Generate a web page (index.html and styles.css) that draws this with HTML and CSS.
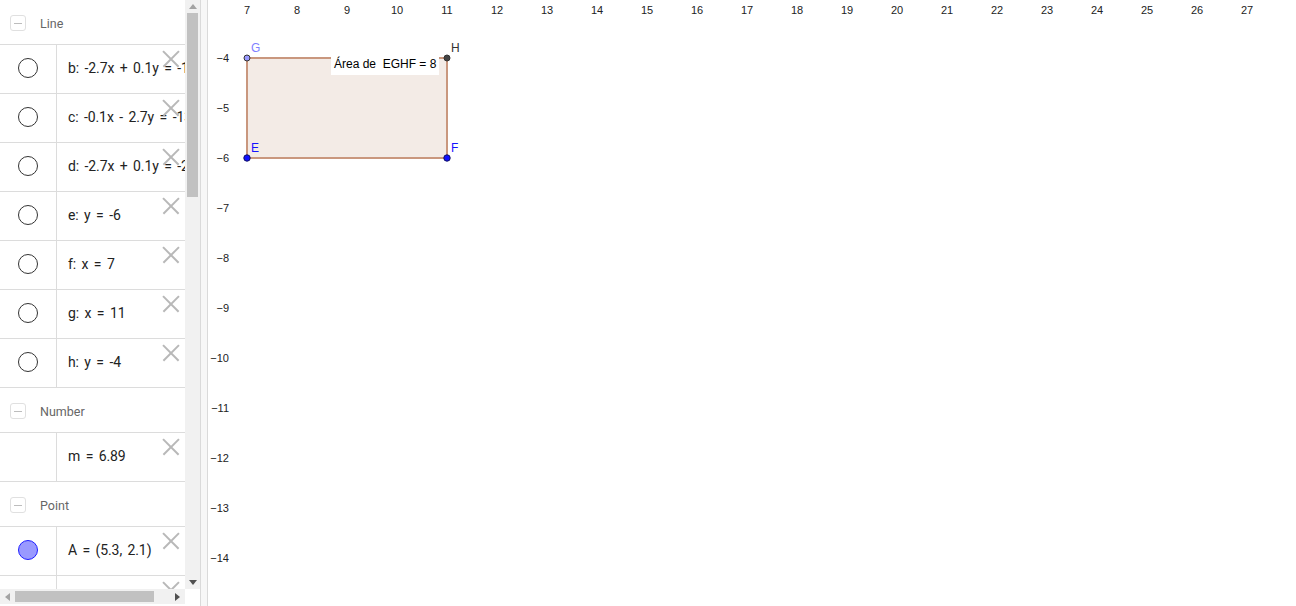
FILE: index.html
```html
<!DOCTYPE html>
<html>
<head>
<meta charset="utf-8">
<link rel="stylesheet" href="styles.css">
</head>
<body>
<div class="app">
  <div class="algebra">
    <div class="list">
      <div class="header"><span class="toggle"></span><span class="htext">Line</span></div>
      <div class="row"><div class="mark"><span class="circle"></span></div><div class="expr">b: -2.7x + 0.1y = -1</div><span class="del"></span></div>
      <div class="row"><div class="mark"><span class="circle"></span></div><div class="expr">c: -0.1x - 2.7y = -13</div><span class="del"></span></div>
      <div class="row"><div class="mark"><span class="circle"></span></div><div class="expr">d: -2.7x + 0.1y = -2</div><span class="del"></span></div>
      <div class="row"><div class="mark"><span class="circle"></span></div><div class="expr">e: y = -6</div><span class="del"></span></div>
      <div class="row"><div class="mark"><span class="circle"></span></div><div class="expr">f: x = 7</div><span class="del"></span></div>
      <div class="row"><div class="mark"><span class="circle"></span></div><div class="expr">g: x = 11</div><span class="del"></span></div>
      <div class="row"><div class="mark"><span class="circle"></span></div><div class="expr">h: y = -4</div><span class="del"></span></div>
      <div class="header"><span class="toggle"></span><span class="htext">Number</span></div>
      <div class="row"><div class="mark"></div><div class="expr">m = 6.89</div><span class="del"></span></div>
      <div class="header"><span class="toggle"></span><span class="htext">Point</span></div>
      <div class="row"><div class="mark"><span class="circle filled"></span></div><div class="expr">A = (5.3, 2.1)</div><span class="del"></span></div>
      <div class="row"><div class="mark"><span class="circle filled"></span></div><div class="expr"></div><span class="del"></span></div>
    </div>
    <div class="vscroll">
      <span class="arrow up"></span>
      <div class="vtrack"><div class="vthumb"></div></div>
      <span class="arrow down"></span>
    </div>
    <div class="hscroll">
      <span class="arrow left"></span>
      <div class="htrack"><div class="hthumb"></div></div>
      <span class="arrow right"></span>
    </div>
    <div class="corner"></div>
  </div>
  <div class="splitter"></div>
  <div class="graphics">
    <svg class="canvas" width="1088" height="606" viewBox="0 0 1088 606">
      <g class="xlabels" text-anchor="middle">
        <text x="39" y="14">7</text><text x="89" y="14">8</text><text x="139" y="14">9</text><text x="189" y="14">10</text>
        <text x="239" y="14">11</text><text x="289" y="14">12</text><text x="339" y="14">13</text><text x="389" y="14">14</text>
        <text x="439" y="14">15</text><text x="489" y="14">16</text><text x="539" y="14">17</text><text x="589" y="14">18</text>
        <text x="639" y="14">19</text><text x="689" y="14">20</text><text x="739" y="14">21</text><text x="789" y="14">22</text>
        <text x="839" y="14">23</text><text x="889" y="14">24</text><text x="939" y="14">25</text><text x="989" y="14">26</text>
        <text x="1039" y="14">27</text>
      </g>
      <g class="ylabels" text-anchor="end">
        <text x="21" y="62">−4</text><text x="21" y="112">−5</text><text x="21" y="162">−6</text>
        <text x="21" y="212">−7</text><text x="21" y="262">−8</text><text x="21" y="312">−9</text>
        <text x="21" y="362">−10</text><text x="21" y="412">−11</text><text x="21" y="462">−12</text>
        <text x="21" y="512">−13</text><text x="21" y="562">−14</text>
      </g>
      <rect class="poly" x="39" y="58" width="200" height="100"></rect>
      <rect class="labelbox" x="123" y="56" width="108" height="19"></rect>
      <text class="area" x="126" y="68">Área de&#160; EGHF = 8</text>
      <circle class="pt ptG" cx="39" cy="58" r="3"></circle>
      <circle class="pt ptH" cx="239" cy="58" r="3"></circle>
      <circle class="pt ptE" cx="39" cy="158" r="3.2"></circle>
      <circle class="pt ptE" cx="239" cy="158" r="3.2"></circle>
      <text class="plabel lG" x="43" y="52">G</text>
      <text class="plabel lH" x="243" y="52">H</text>
      <text class="plabel lE" x="43" y="152">E</text>
      <text class="plabel lE" x="243" y="152">F</text>
    </svg>
  </div>
</div>
</body>
</html>
```
FILE: styles.css
```css
* { box-sizing: border-box; }
html, body { margin: 0; padding: 0; background: #fff; }
body { width: 1296px; height: 606px; overflow: hidden; font-family: Roboto, "Liberation Sans", sans-serif; }
.app { display: flex; width: 1296px; height: 606px; }

.algebra {
  width: 200px; height: 606px;
  display: grid;
  grid-template-columns: 185px 15px;
  grid-template-rows: 589px 17px;
}
.list { overflow: hidden; background: #fff; }
.header {
  height: 45px; border-bottom: 1px solid #dcdcdc;
  display: flex; align-items: center; padding-left: 10px;
}
.toggle {
  width: 16px; height: 16px; border: 1px solid #e0e0e0; border-radius: 3px;
  position: relative; margin-right: 14px; margin-top: 2px;
}
.toggle::after {
  content: ""; position: absolute; left: 3px; right: 3px; top: 7px; height: 1px; background: #bdbdbd;
}
.htext { font-size: 12.5px; color: #666; margin-top: 2px; }
.row {
  height: 49px; border-bottom: 1px solid #dcdcdc;
  display: flex; position: relative;
}
.mark {
  flex: none;
  width: 57px; border-right: 1px solid #dcdcdc;
  display: flex; align-items: center; justify-content: center;
}
.circle {
  width: 20px; height: 20px; border-radius: 50%; border: 1px solid #333; display: block; margin-top: -2px;
}
.circle.filled { background: #9999ff; border: 1px solid #1f1fff; }
.expr {
  flex: 1; min-width: 0; overflow: hidden;
  padding-left: 11px; padding-bottom: 3px; font-size: 14px; color: #222; white-space: nowrap;
  display: flex; align-items: center; letter-spacing: -0.1px; word-spacing: 2.1px;
}
.del {
  position: absolute; left: 163px; top: 6px; width: 16px; height: 16px;
}
.del::before, .del::after {
  content: ""; position: absolute; left: -3px; top: 7px; width: 22px; height: 1.5px; background: #b8b8b8;
}
.del::before { transform: rotate(45deg); }
.del::after { transform: rotate(-45deg); }

.vscroll { background: #f1f1f1; display: flex; flex-direction: column; align-items: center; }
.vtrack { flex: 1; width: 100%; padding: 0 2px; }
.vthumb { margin-top: 0; height: 184px; background: #c1c1c1; }
.hscroll { background: #f1f1f1; display: flex; align-items: center; height: 15px; }
.htrack { flex: 1; height: 100%; padding: 2px 0; }
.hthumb { margin-left: 0; width: 139px; height: 100%; background: #c1c1c1; }
.corner { background: #fff; }
.arrow { display: block; width: 0; height: 0; flex: none; }
.arrow.up { margin: 4px 0 4px; border-left: 4px solid transparent; border-right: 4px solid transparent; border-bottom: 5px solid #a3a3a3; }
.arrow.down { margin: 4px 0 4px; border-left: 4px solid transparent; border-right: 4px solid transparent; border-top: 5px solid #505050; }
.arrow.left { margin: 0 5px 0 5px; border-top: 4px solid transparent; border-bottom: 4px solid transparent; border-right: 5px solid #a3a3a3; }
.arrow.right { margin: 0 5px 0 5px; border-top: 4px solid transparent; border-bottom: 4px solid transparent; border-left: 5px solid #505050; }

.splitter { width: 8px; height: 606px; background: #f7f7f7; border-left: 1px solid #dadada; border-right: 1px solid #dadada; }
.graphics { flex: 1; height: 606px; background: #fff; }
.canvas { display: block; }
.xlabels text, .ylabels text { font-family: "Liberation Sans", Arial, sans-serif; font-size: 11px; fill: #222; }
.poly { fill: #f3ebe6; stroke: #c9977e; stroke-width: 2; }
.labelbox { fill: #fff; }
.area { font-family: "Liberation Sans", Arial, sans-serif; font-size: 12px; fill: #000; }
.pt { stroke: #333; stroke-width: 1; }
.ptG { fill: #9999ff; }
.ptH { fill: #444; }
.ptE { fill: #1010ff; stroke: #101060; }
.plabel { font-family: "Liberation Sans", Arial, sans-serif; font-size: 12px; }
.lG { fill: #7f7fff; }
.lH { fill: #333; }
.lE { fill: #1414ff; }
```
